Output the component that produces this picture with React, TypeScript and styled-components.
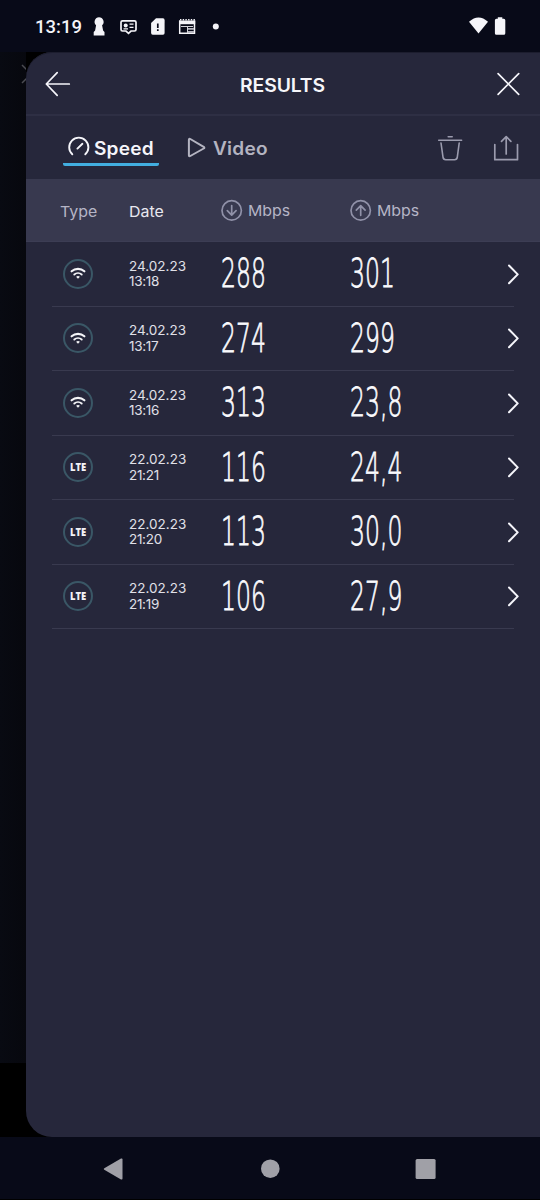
import React from "react";
import styled, { createGlobalStyle } from "styled-components";

const GlobalStyle = createGlobalStyle`
  * { box-sizing: border-box; }
  body { margin: 0; background: #080a18; font-family: Inter, "Liberation Sans", sans-serif; }
  svg { display: block; flex: none; fill: none; overflow: visible; }
`;

const Screen = styled.div`
  width: 540px;
  height: 1200px;
  display: flex;
  flex-direction: column;
  overflow: hidden;
  background: #080a18;
`;

const StatusBar = styled.header`
  height: 52px;
  flex: none;
  display: flex;
  align-items: center;
  padding: 2px 33px 0 35px;
`;

const Clock = styled.span`
  width: 58px;
  font: 500 18.5px/24px Roboto, sans-serif;
  color: #f4f4f8;
`;

const StatusIcons = styled.div`
  display: flex;
  flex: 1;
`;

const Stage = styled.div`
  height: 1085px;
  flex: none;
  display: flex;
  background: #000;
`;

const Backdrop = styled.div`
  width: 26px;
  height: 1011px;
  padding: 12px 0 0 21px;
  overflow: hidden;
  background: linear-gradient(90deg, #080a12, #07080e);
`;

const Panel = styled.main`
  width: 514px;
  border-radius: 26px 0 0 26px;
  overflow: hidden;
  background: #26273b;
  box-shadow: inset 0 1px 0 #1c1d2e;
`;

const TitleBar = styled.div`
  height: 64px;
  display: flex;
  align-items: center;
  justify-content: space-between;
  padding: 2px 19px 0;
  border-bottom: 2px solid #2e2f44;
`;

const Title = styled.h1`
  margin: 3px 2px 0 0;
  font-size: 18px;
  line-height: 24px;
  font-weight: 600;
  color: #f6f6fa;
  letter-spacing: -0.1px;
  transform: scaleX(1.075);
`;

const Toolbar = styled.div`
  height: 63px;
  display: flex;
  align-items: flex-start;
  padding: 18px 21px 0 37px;
`;

const Tab = styled.div<{ $active?: boolean; $width: number }>`
  width: ${(p) => p.$width}px;
  height: 32px;
  display: flex;
  padding: 2px 0 0 5px;
  color: ${(p) => (p.$active ? "#f5f5fa" : "#b4b4c1")};
  border-bottom: 3px solid ${(p) => (p.$active ? "#42aee0" : "transparent")};
  border-radius: 2px;
  margin-right: 23px;
`;

const TabLabel = styled.span<{ $gap: number }>`
  margin: 1px 0 0 ${(p) => p.$gap}px;
  font-size: 18px;
  line-height: 24px;
  font-weight: 600;
  letter-spacing: 0.2px;
  transform: scaleX(1.06);
  transform-origin: left;
`;

const Actions = styled.div`
  display: flex;
  gap: 31px;
  margin-left: auto;
`;

const TableHead = styled.div`
  height: 63px;
  display: grid;
  grid-template-columns: 69px 92px 129px 1fr;
  align-items: center;
  padding-left: 34px;
  background: #38394f;
  border-bottom: 1px solid #3c3d54;
`;

const HeadCell = styled.div<{ $bright?: boolean }>`
  display: flex;
  align-items: center;
  gap: 5px;
  font-size: 15px;
  line-height: 20px;
  color: ${(p) => (p.$bright ? "#e8e8f0" : "#b5b5c6")};
`;

const HeadText = styled.span<{ $drop: number }>`
  padding-top: ${(p) => p.$drop}px;
  transform: scaleX(1.06);
  transform-origin: left;
`;

const Row = styled.div`
  height: 64.5px;
  margin: 0 26px;
  display: grid;
  grid-template-columns: 77px 92px 129px 1fr 8px;
  align-items: center;
  border-bottom: 1px solid #393a4f;
`;

const Badge = styled.div`
  width: 30px;
  height: 30px;
  margin-left: 11px;
  display: flex;
  align-items: center;
  justify-content: center;
  border: 2px solid #3a5766;
  border-radius: 50%;
`;

const Lte = styled.span`
  font: 800 10.5px/14px "Open Sans", sans-serif;
  color: #f2f2f6;
  transform: scaleX(0.9);
`;

const DateText = styled.div`
  padding-top: 1px;
  font-size: 13.5px;
  line-height: 15.5px;
  color: #e0e0e8;
`;

const Time = styled.div`
  letter-spacing: -0.3px;
`;

const Speed = styled.div`
  margin-top: 1px;
  font: 200 39px/44px "DejaVu Sans", sans-serif;
  transform: scaleX(0.603);
  transform-origin: left;
  white-space: nowrap;
  color: #fafafd;
  -webkit-text-stroke: 0.8px #fafafd;
`;

const NavBar = styled.nav`
  height: 63px;
  flex: none;
  display: flex;
  justify-content: space-between;
  padding: 21px 104px 0 103px;
  border-bottom: 1px solid #000;
`;

const WifiIcon = () => (
  <svg width="16" height="13" viewBox="0 0 16 13" stroke="#f5f5f8" strokeLinecap="round">
    <path d="M1.6 4.3a9.6 9.6 0 0 1 12.8 0" strokeWidth="2.1" />
    <path d="M4.3 7.5a5.6 5.6 0 0 1 7.4 0" strokeWidth="1.9" />
    <path d="M6.1 9.8a2.8 2.8 0 0 1 3.8 0L8 11.8z" fill="#f5f5f8" stroke="none" />
  </svg>
);

const DirectionIcon = ({ up }: { up?: boolean }) => (
  <svg width="22" height="22" viewBox="0 0 22 22" stroke="#9091a8" strokeWidth="1.7" strokeLinecap="round" strokeLinejoin="round">
    <circle cx="10.7" cy="11.4" r="9.7" />
    <path d={up ? "M10.7 16.3V7M6.3 11.1l4.4-4.4 4.4 4.4" : "M10.7 6.6v9.3M6.3 11.7l4.4 4.4 4.4-4.4"} />
  </svg>
);

const results = [
  { type: "wifi", date: "24.02.23", time: "13:18", down: "288", up: "301" },
  { type: "wifi", date: "24.02.23", time: "13:17", down: "274", up: "299" },
  { type: "wifi", date: "24.02.23", time: "13:16", down: "313", up: "23,8" },
  { type: "lte", date: "22.02.23", time: "21:21", down: "116", up: "24,4" },
  { type: "lte", date: "22.02.23", time: "21:20", down: "113", up: "30,0" },
  { type: "lte", date: "22.02.23", time: "21:19", down: "106", up: "27,9" },
];

export default function App() {
  return (
    <Screen>
      <GlobalStyle />
      <StatusBar>
        <Clock>13:19</Clock>
        <StatusIcons>
          <svg width="130" height="20" viewBox="93 17 130 20">
            <path d="M99 17.3a4.6 4.6 0 0 1 3.1 8l1 5.2 1.4 1.6v3.3H93.7v-3.3l1.4-1.6 1-5.2a4.6 4.6 0 0 1 2.9-8z" fill="#f4f4f8" />
            <path d="M122.5 20.8h12q1.5 0 1.5 1.5v7.2q0 1.5-1.5 1.5h-3.5l-2.5 2.3-2.5-2.3h-3.5q-1.5 0-1.5-1.5v-7.2q0-1.5 1.5-1.5z" stroke="#f4f4f8" strokeWidth="1.7" />
            <circle cx="125.7" cy="25.5" r="2" fill="#f4f4f8" />
            <path d="M129.5 24.2h4M129.5 27.3h4M123.5 28.8h4.5" stroke="#f4f4f8" strokeWidth="1.3" />
            <path d="M156 18.3h7q1.6 0 1.6 1.6v13.2q0 1.6-1.6 1.6h-10.3q-1.6 0-1.6-1.6v-10z" fill="#f4f4f8" />
            <path d="M157.8 23.5v4.5M157.8 29.3v1.8" stroke="#0a0b1a" strokeWidth="1.7" />
            <path d="M179.7 20.5v12.7h14.8V20.5" stroke="#f4f4f8" strokeWidth="1.5" />
            <path d="M179 20.5h16.2v3.7H179z" fill="#f4f4f8" />
            <path d="M180 19.7h15" stroke="#f4f4f8" strokeWidth="1.5" strokeDasharray="1.4 1.3" />
            <path d="M181 26.5h12M187.5 27v6" stroke="#d4d4da" strokeWidth="1" />
            <path d="M188 28h6v1.7h-6zM188 31h6v2h-6z" fill="#b6b6bf" />
            <circle cx="215.8" cy="26.5" r="3" fill="#f4f4f8" />
          </svg>
        </StatusIcons>
        <svg width="38" height="20" viewBox="469 17 38 20">
          <path d="M478.5 33.5 469 21.7q9.5-8.5 19 0z" fill="#f6f6fa" />
          <path d="M497.8 17.3h4.5v1.5h1.5q1.5 0 1.5 1.5v13q0 1.5-1.5 1.5h-7.4q-1.5 0-1.5-1.5v-13q0-1.5 1.5-1.5h1.4z" fill="#f6f6fa" />
        </svg>
      </StatusBar>
      <Stage>
        <Backdrop>
          <svg width="20" height="20" viewBox="0 0 20 20" stroke="#4b4c52" strokeWidth="1.5">
            <path d="m1 1 18 18M19 1 1 19" />
          </svg>
        </Backdrop>
        <Panel>
          <TitleBar>
            <svg width="26" height="26" viewBox="0 0 26 26" stroke="#f5f5fa" strokeWidth="1.7" strokeLinecap="round" strokeLinejoin="round">
              <path d="M24.3 13H1.5M12.2 1.7 1.3 13l10.9 11.3" />
            </svg>
            <Title>RESULTS</Title>
            <svg width="26" height="26" viewBox="0 0 26 26" stroke="#f5f5fa" strokeWidth="1.7" strokeLinecap="round">
              <path d="m3.1 2.7 20.6 20.6M23.7 2.7 3.1 23.3" />
            </svg>
          </TitleBar>
          <Toolbar>
            <Tab $active $width={96}>
              <svg width="22" height="22" viewBox="0 0 22 22" stroke="currentColor" strokeWidth="1.9" strokeLinecap="round">
                <path d="M4.3 18.3A9.6 9.6 0 1 1 17.3 18.3M9.4 12.6l5-4.8" />
              </svg>
              <TabLabel $gap={4}>Speed</TabLabel>
            </Tab>
            <Tab $width={90}>
              <svg width="20" height="22" viewBox="0 0 20 22" stroke="currentColor" strokeWidth="2" strokeLinejoin="round">
                <path d="M1.9 3.7v15.6q0 1.5 1.4.7L16.7 12.5q1.3-.9 0-1.7L3.3 3q-1.4-.8-1.4.7z" />
              </svg>
              <TabLabel $gap={6}>Video</TabLabel>
            </Tab>
            <Actions>
              <svg width="25" height="28" viewBox="0 0 25 28" stroke="#9b9bae" strokeWidth="1.6" strokeLinecap="round" strokeLinejoin="round">
                <path d="M1.7 6.2h22.9M11.2 2.8h4M4 9l2 14.2q.3 2.5 2.7 2.5h8.9q2.4 0 2.7-2.5L22.2 9" />
              </svg>
              <svg width="26" height="28" viewBox="0 0 26 28" stroke="#9b9bae" strokeWidth="1.7" strokeLinecap="round" strokeLinejoin="round">
                <path d="M1.8 10.5v15.2h22.7V10.5M13.2 20V3M8.5 7.3l4.7-4.6 4.7 4.6" />
              </svg>
            </Actions>
          </Toolbar>
          <TableHead>
            <HeadCell><HeadText $drop={3}>Type</HeadText></HeadCell>
            <HeadCell $bright><HeadText $drop={3}>Date</HeadText></HeadCell>
            <HeadCell><DirectionIcon /><HeadText $drop={1}>Mbps</HeadText></HeadCell>
            <HeadCell><DirectionIcon up /><HeadText $drop={1}>Mbps</HeadText></HeadCell>
          </TableHead>
          {results.map((r) => (
            <Row key={r.time}>
              <Badge>{r.type === "wifi" ? <WifiIcon /> : <Lte>LTE</Lte>}</Badge>
              <DateText>{r.date}<Time>{r.time}</Time></DateText>
              <Speed>{r.down}</Speed>
              <Speed>{r.up}</Speed>
              <svg width="14" height="22" viewBox="0 0 14 22" stroke="#f5f5fa" strokeWidth="2" strokeLinecap="round" strokeLinejoin="round">
                <path d="m3 2.5 8.7 8.9L3 20.3" />
              </svg>
            </Row>
          ))}
        </Panel>
      </Stage>
      <NavBar>
        <svg width="20" height="22" viewBox="0 0 20 22">
          <path d="M1.3 10.2 18 .6q1.5-.6 1.5.8v19.2q0 1.4-1.5.8L1.3 11.8q-1.2-.8 0-1.6z" fill="#a0a0a7" />
        </svg>
        <svg width="20" height="22" viewBox="0 0 20 22"><circle cx="10.3" cy="10.7" r="9.3" fill="#a0a0a7" /></svg>
        <svg width="20" height="22" viewBox="0 0 20 22"><rect x="-.4" y="1" width="20" height="20" rx="1.5" fill="#a0a0a7" /></svg>
      </NavBar>
    </Screen>
  );
}
